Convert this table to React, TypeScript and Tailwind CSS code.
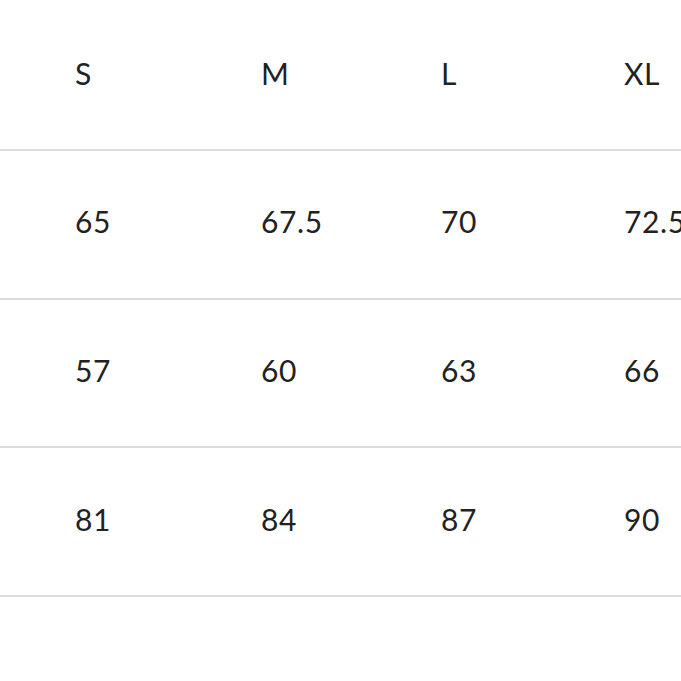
import React from "react";

const rows: string[][] = [
  ["S", "M", "L", "XL"],
  ["65", "67.5", "70", "72.5"],
  ["57", "60", "63", "66"],
  ["81", "84", "87", "90"],
];

export default function App() {
  return (
    <div
      className="w-[681px] h-[681px] overflow-hidden bg-white text-[#222222]"
      style={{ fontFamily: "Lato, 'Noto Sans', sans-serif" }}
    >
      <div className="w-[900px] pt-[2.5px]">
        {rows.map((r, i) => (
          <div
            key={i}
            className="h-[148.67px] border-b-2 border-[#dcdcdc] grid grid-cols-[186px_180px_183px_200px] items-center pl-[75px] pb-[6px] text-[30px] tracking-[0.6px] leading-none"
          >
            {r.map((c, j) => (
              <div key={j} className="whitespace-nowrap">
                {c}
              </div>
            ))}
          </div>
        ))}
      </div>
    </div>
  );
}
